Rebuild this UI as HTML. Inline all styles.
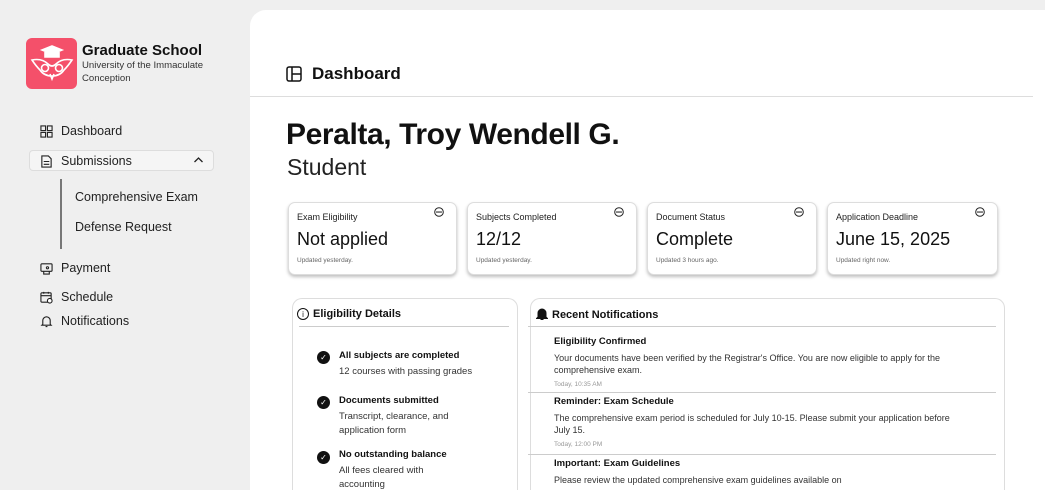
<!DOCTYPE html>
<html style="overflow:hidden;height:490px"><head><meta charset="utf-8"><style>
*{box-sizing:border-box;margin:0;padding:0}
body{width:1045px;height:490px;overflow:hidden;background:#efefef;font-family:"Liberation Sans",sans-serif;color:#111;position:relative}
.abs{position:absolute}
.logo{left:26px;top:38px;width:51px;height:51px;background:#f4506a;border-radius:6px}
.nav{left:40px;font-size:12.5px;color:#222;display:flex;align-items:center;gap:8px}
.nav svg{width:13px;height:13px}
.main{left:250px;top:10px;width:795px;height:480px;background:#fff;border-radius:16px 0 0 0}
.card{top:202px;height:73px;background:#fff;border:1px solid #ddd;border-radius:7px;box-shadow:0 2px 3px rgba(0,0,0,.25);padding:9px 8px}
.card .t{font-size:9px;color:#222}
.card .v{font-size:18px;margin-top:7px;color:#111}
.card .u{font-size:6.5px;color:#666;margin-top:7px}
.card svg{position:absolute;right:12px;top:4px}
.panel{top:298px;height:192px;background:#fff;border:1px solid #ddd;border-bottom:none;border-radius:10px 10px 0 0;overflow:hidden}
.ph{font-size:11px;font-weight:bold;display:flex;align-items:center;gap:4px;position:absolute;top:9px;left:4px}
.chk{position:absolute;left:24px;width:13px;height:13px;border-radius:50%;background:#111;color:#fff;font-size:8px;text-align:center;line-height:13px}
.it{position:absolute;left:46px;font-size:9.5px;line-height:14px;color:#333}
.it b{color:#111;display:block;margin-bottom:2px}
.n{position:absolute;left:23px;font-size:9px;color:#333;line-height:12.5px}
.n b{color:#111;font-size:9.5px;display:block;margin-bottom:3px}
.n i{font-style:normal;font-size:6.5px;color:#999;display:block;margin-top:2px}
.hl{position:absolute;height:1px;background:#ccc}
</style></head><body>
<div class="abs logo"><svg width="51" height="51" viewBox="0 0 51 51" fill="none" stroke="#fff" stroke-width="1.6"><path d="M16 12 L26 8 L36 12 L26 16Z" fill="#fff"/><path d="M19 14 V19 H33 V14" fill="#fff"/><path d="M6 22 Q16 20 22 26 Q26 30 30 26 Q36 20 46 22 Q42 28 38 32 Q34 38 26 38 Q18 38 14 32 Q10 28 6 22Z"/><circle cx="19" cy="30" r="3.5"/><circle cx="33" cy="30" r="3.5"/><path d="M24 36 L26 41 L28 36"/></svg></div>
<div class="abs" style="left:82px;top:42px;font-size:15px;font-weight:bold">Graduate School</div>
<div class="abs" style="left:82px;top:60px;font-size:9.6px;color:#333;line-height:12.5px">University of the Immaculate<br>Conception</div>

<div class="abs nav" style="top:124px"><svg viewBox="0 0 14 14" fill="none" stroke="#222" stroke-width="1.2"><rect x="1" y="1" width="5" height="5"/><rect x="8" y="1" width="5" height="5"/><rect x="1" y="8" width="5" height="5"/><rect x="8" y="8" width="5" height="5"/></svg><span>Dashboard</span></div>
<div class="abs" style="left:29px;top:150px;width:185px;height:21px;border:1px solid #ddd;border-radius:4px;background:#f5f5f5"></div>
<div class="abs nav" style="top:154px"><svg viewBox="0 0 14 14" fill="none" stroke="#222" stroke-width="1.2"><path d="M2 1H9L12 4V13H2Z M4 7H10 M4 10H10"/></svg><span>Submissions</span></div>
<svg class="abs" style="left:193px;top:156px" width="11" height="8" viewBox="0 0 11 8" fill="none" stroke="#222" stroke-width="1.3"><path d="M1.5 6L5.5 2L9.5 6"/></svg>
<div class="abs" style="left:60px;top:179px;width:2px;height:70px;background:#777"></div>
<div class="abs" style="left:75px;top:190px;font-size:12.5px;color:#222">Comprehensive Exam</div>
<div class="abs" style="left:75px;top:220px;font-size:12.5px;color:#222">Defense Request</div>
<div class="abs nav" style="top:261px"><svg viewBox="0 0 14 14" fill="none" stroke="#222" stroke-width="1.2"><rect x="1" y="2" width="12" height="8" rx="1"/><path d="M4 10V13H10V10 M8 5a1.2 1.2 0 1 0 .1 0"/></svg><span>Payment</span></div>
<div class="abs nav" style="top:290px"><svg viewBox="0 0 14 14" fill="none" stroke="#222" stroke-width="1.2"><rect x="1" y="2" width="11" height="10" rx="1"/><path d="M4 1V3M9 1V3M1 5H12"/><circle cx="10.5" cy="10.5" r="2.5" fill="#fff"/></svg><span>Schedule</span></div>
<div class="abs nav" style="top:314px"><svg viewBox="0 0 14 14" fill="none" stroke="#222" stroke-width="1.2"><path d="M3 10V6a4 4 0 0 1 8 0v4l1 1H2Z M6 12.5h2"/></svg><span>Notifications</span></div>

<div class="abs main"></div>
<svg class="abs" style="left:286px;top:66px" width="16" height="16" viewBox="0 0 16 16" fill="none" stroke="#111" stroke-width="1.5"><rect x="1" y="1" width="14" height="14" rx="2"/><path d="M6 1V15M6 8H15"/></svg>
<div class="abs" style="left:312px;top:64px;font-size:17px;font-weight:bold">Dashboard</div>
<div class="abs hl" style="left:250px;top:96px;width:783px;background:#ddd"></div>
<div class="abs" style="left:286px;top:118px;font-size:30px;font-weight:bold;letter-spacing:-0.4px">Peralta, Troy Wendell G.</div>
<div class="abs" style="left:287px;top:154px;font-size:23px;color:#222">Student</div>

<div class="abs card" style="left:288px;width:169px"><div class="t">Exam Eligibility</div><div class="v">Not applied</div><div class="u">Updated yesterday.</div><svg width="10" height="10" viewBox="0 0 10 10"><circle cx="5" cy="5" r="4.3" fill="none" stroke="#222"/><circle cx="3" cy="5" r=".8"/><circle cx="5" cy="5" r=".8"/><circle cx="7" cy="5" r=".8"/></svg></div>
<div class="abs card" style="left:467px;width:170px"><div class="t">Subjects Completed</div><div class="v">12/12</div><div class="u">Updated yesterday.</div><svg width="10" height="10" viewBox="0 0 10 10"><circle cx="5" cy="5" r="4.3" fill="none" stroke="#222"/><circle cx="3" cy="5" r=".8"/><circle cx="5" cy="5" r=".8"/><circle cx="7" cy="5" r=".8"/></svg></div>
<div class="abs card" style="left:647px;width:170px"><div class="t">Document Status</div><div class="v">Complete</div><div class="u">Updated 3 hours ago.</div><svg width="10" height="10" viewBox="0 0 10 10"><circle cx="5" cy="5" r="4.3" fill="none" stroke="#222"/><circle cx="3" cy="5" r=".8"/><circle cx="5" cy="5" r=".8"/><circle cx="7" cy="5" r=".8"/></svg></div>
<div class="abs card" style="left:827px;width:171px"><div class="t">Application Deadline</div><div class="v">June 15, 2025</div><div class="u">Updated right now.</div><svg width="10" height="10" viewBox="0 0 10 10"><circle cx="5" cy="5" r="4.3" fill="none" stroke="#222"/><circle cx="3" cy="5" r=".8"/><circle cx="5" cy="5" r=".8"/><circle cx="7" cy="5" r=".8"/></svg></div>

<div class="abs panel" style="left:292px;width:226px">
<div class="ph"><span style="width:12px;height:12px;border:1px solid #111;border-radius:50%;font-size:8px;text-align:center;line-height:11px;font-weight:normal">i</span>Eligibility Details</div>
<div class="hl" style="left:6px;right:8px;top:27px"></div>
<div class="chk" style="top:52px">✓</div><div class="it" style="top:50px"><b>All subjects are completed</b>12 courses with passing grades</div>
<div class="chk" style="top:97px">✓</div><div class="it" style="top:95px"><b>Documents submitted</b>Transcript, clearance, and<br>application form</div>
<div class="chk" style="top:152px">✓</div><div class="it" style="top:149px"><b>No outstanding balance</b>All fees cleared with<br>accounting</div>
</div>

<div class="abs panel" style="left:530px;width:475px;overflow:visible">
<div class="ph" style="left:5px"><svg width="12" height="13" viewBox="0 0 12 13"><path d="M2 9V5a4 4 0 0 1 8 0v4l1.5 1.5H.5Z M4.5 11.5h3" fill="#111" stroke="#111"/></svg>Recent Notifications</div>
<div class="hl" style="left:-3px;right:8px;top:27px"></div>
<div class="n" style="top:37px"><b>Eligibility Confirmed</b>Your documents have been verified by the Registrar's Office. You are now eligible to apply for the<br>comprehensive exam.<i>Today, 10:35 AM</i></div>
<div class="hl" style="left:-3px;right:8px;top:93px"></div>
<div class="n" style="top:97px"><b>Reminder: Exam Schedule</b>The comprehensive exam period is scheduled for July 10-15. Please submit your application before<br>July 15.<i>Today, 12:00 PM</i></div>
<div class="hl" style="left:-3px;right:8px;top:155px"></div>
<div class="n" style="top:159px;height:31px;overflow:hidden"><b>Important: Exam Guidelines</b>Please review the updated comprehensive exam guidelines available on</div>
</div>
</body></html>
